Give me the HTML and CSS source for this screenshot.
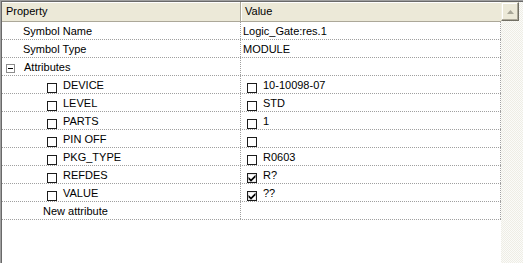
FILE: index.html
```html
<!DOCTYPE html>
<html>
<head>
<meta charset="utf-8">
<link rel="stylesheet" href="styles.css">
</head>
<body>
<div class="window">
  <div class="grid">
    <div class="header">
      <div class="hcell hprop">Property</div>
      <div class="hcell hval">Value</div>
    </div>
    <div class="rows">
      <div class="row">
        <div class="cell name lvl1">Symbol Name</div>
        <div class="cell value">Logic_Gate:res.1</div>
      </div>
      <div class="row">
        <div class="cell name lvl1">Symbol Type</div>
        <div class="cell value">MODULE</div>
      </div>
      <div class="row">
        <div class="cell name group"><span class="toggle"></span><span>Attributes</span></div>
        <div class="cell value"></div>
      </div>
      <div class="row">
        <div class="cell name lvl2"><span class="cb"></span><span>DEVICE</span></div>
        <div class="cell value boxed"><span class="cb"></span><span>10-10098-07</span></div>
      </div>
      <div class="row">
        <div class="cell name lvl2"><span class="cb"></span><span>LEVEL</span></div>
        <div class="cell value boxed"><span class="cb"></span><span>STD</span></div>
      </div>
      <div class="row">
        <div class="cell name lvl2"><span class="cb"></span><span>PARTS</span></div>
        <div class="cell value boxed"><span class="cb"></span><span>1</span></div>
      </div>
      <div class="row">
        <div class="cell name lvl2"><span class="cb"></span><span>PIN OFF</span></div>
        <div class="cell value boxed"><span class="cb"></span><span></span></div>
      </div>
      <div class="row">
        <div class="cell name lvl2"><span class="cb"></span><span>PKG_TYPE</span></div>
        <div class="cell value boxed"><span class="cb"></span><span>R0603</span></div>
      </div>
      <div class="row">
        <div class="cell name lvl2"><span class="cb"></span><span>REFDES</span></div>
        <div class="cell value boxed"><span class="cb checked"><svg viewBox="0 0 8 8" width="8" height="8"><path d="M0.5 3 L3 5.3 L7.5 0.8 L7.5 3.3 L3 7.8 L0.5 5.3 Z" fill="#000"/></svg></span><span>R?</span></div>
      </div>
      <div class="row">
        <div class="cell name lvl2"><span class="cb"></span><span>VALUE</span></div>
        <div class="cell value boxed"><span class="cb checked"><svg viewBox="0 0 8 8" width="8" height="8"><path d="M0.5 3 L3 5.3 L7.5 0.8 L7.5 3.3 L3 7.8 L0.5 5.3 Z" fill="#000"/></svg></span><span>??</span></div>
      </div>
      <div class="row">
        <div class="cell name lvl3">New attribute</div>
        <div class="cell value"></div>
      </div>
    </div>
  </div>
  <div class="vscroll">
    <div class="btn-up"><svg width="7" height="4" viewBox="0 0 7 4"><path d="M3.5 0 L7 4 L0 4 Z" fill="#a8a697"/></svg></div>
  </div>
</div>
</body>
</html>
```
FILE: styles.css
```css
html, body {
  margin: 0;
  padding: 0;
  background: #ffffff;
}
body {
  font-family: "Liberation Sans", Arial, sans-serif;
  font-size: 11px;
  color: #000;
}
.window {
  width: 523px;
  height: 263px;
  box-sizing: border-box;
  border-left: 1px solid #a0a0a0;
  border-top: 1px solid #a0a0a0;
  display: flex;
  overflow: hidden;
}
.grid {
  width: 500px;
  box-sizing: border-box;
  border-left: 1px solid #696969;
  border-top: 1px solid #696969;
  background: #fff;
  flex: none;
}
.header {
  display: flex;
  height: 20px;
  box-sizing: border-box;
  background: #ece9d8;
  border-bottom: 1px solid #aca899;
  box-shadow: inset 0 1px 0 #fff;
}
.hcell {
  line-height: 19px;
  padding-left: 4px;
  box-sizing: border-box;
}
.hprop {
  width: 239px;
  border-right: 1px solid #aca899;
}
.hval {
  flex: 1;
  border-left: 1px solid #fff;
  padding-left: 3px;
}
.row {
  display: flex;
  height: 18px;
  box-sizing: border-box;
  border-bottom: 1px dotted #a0a0a0;
}
.cell {
  display: flex;
  align-items: center;
  box-sizing: border-box;
  white-space: nowrap;
}
.name {
  width: 239px;
  border-right: 1px dotted #a0a0a0;
}
.value {
  flex: 1;
  padding-left: 2px;
  border-right: 1px dotted #a0a0a0;
}
.lvl1 { padding-left: 21px; }
.lvl3 { padding-left: 41px; }
.group { padding-left: 4px; }
.lvl2 { padding-left: 45px; }
.value.boxed { padding-left: 6px; }
.toggle {
  width: 9px;
  height: 9px;
  box-sizing: border-box;
  border: 1px solid #8c8c8c;
  margin-top: 3px;
  margin-right: 9px;
  position: relative;
  background: #fff;
}
.toggle::after {
  content: "";
  position: absolute;
  left: 1px;
  top: 3px;
  width: 5px;
  height: 1px;
  background: #000;
}
.cb {
  width: 10px;
  height: 10px;
  box-sizing: border-box;
  border: 1px solid #1c1c1c;
  align-self: flex-end;
  margin-right: 6px;
  flex: none;
  display: flex;
  align-items: center;
  justify-content: center;
  background: #fff;
}
.cb.checked {
  box-shadow: inset 0 0 0 1px #e8e8e8;
}
.vscroll {
  flex: 1;
  background: repeating-conic-gradient(#eeede5 0 25%, #fbfbf9 0 50%) 0 0 / 2px 2px;
  border-top: 1px solid #696969;
}
.btn-up {
  width: 18px;
  height: 19px;
  box-sizing: border-box;
  background: #ece9d8;
  border-top: 1px solid #f1efe2;
  border-left: 1px solid #f1efe2;
  border-right: 1px solid #716f64;
  border-bottom: 1px solid #716f64;
  box-shadow: inset -1px -1px 0 #aca899, inset 1px 1px 0 #fff;
  display: flex;
  align-items: center;
  justify-content: center;
}
```
